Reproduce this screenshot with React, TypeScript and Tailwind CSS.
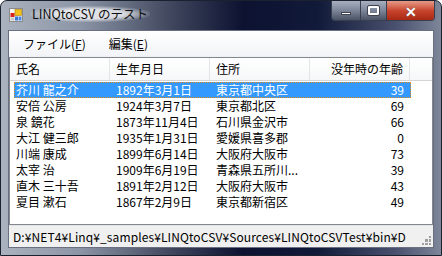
import React from "react";

const rows = [
  ["芥川 龍之介", "1892年3月1日", "東京都中央区", "39"],
  ["安倍 公房", "1924年3月7日", "東京都北区", "69"],
  ["泉 鏡花", "1873年11月4日", "石川県金沢市", "66"],
  ["大江 健三郎", "1935年1月31日", "愛媛県喜多郡", "0"],
  ["川端 康成", "1899年6月14日", "大阪府大阪市", "73"],
  ["太宰 治", "1909年6月19日", "青森県五所川...", "39"],
  ["直木 三十吾", "1891年2月12日", "大阪府大阪市", "43"],
  ["夏目 漱石", "1867年2月9日", "東京都新宿区", "49"],
];

const font = "font-['Noto_Sans_CJK_JP','Noto_Sans',sans-serif]";

function AppIcon() {
  return (
    <svg width="14" height="14" viewBox="0 0 14 14">
      <rect x="0.5" y="0.5" width="13" height="13" fill="#f4f4f4" stroke="#8a8a8a" />
      <rect x="6" y="1.5" width="6.5" height="6" fill="#f2c21b" stroke="#b08000" strokeWidth="0.6" />
      <rect x="1.5" y="5" width="4" height="4" fill="#d8231b" />
      <rect x="6" y="8.5" width="3" height="4" fill="#3a78d8" />
      <rect x="9.5" y="8.5" width="3" height="4" fill="#4a88e8" />
      <rect x="1.5" y="9.5" width="4" height="3" fill="#c8c8c8" />
    </svg>
  );
}

export default function App() {
  return (
    <div className={`w-[442px] h-[256px] overflow-hidden ${font} rounded-t-[7px] bg-[linear-gradient(90deg,#aab2be_0%,#8c95a6_18%,#3b4259_40%,#0c1230_55%,#121a3a_72%,#4a5270_90%,#7e8699_100%)] border border-[#1c2130] flex flex-col`}>
      {/* title bar */}
      <div className="h-[29px] flex items-start shrink-0">
        <div className="ml-[8px] mt-[7px]">
          <AppIcon />
        </div>
        <div className="ml-[7px] mt-[5px] px-[2px] text-[12.5px] leading-[16px] text-[#101010] rounded-[8px] bg-[radial-gradient(ellipse_at_center,rgba(255,255,255,0.75)_40%,rgba(255,255,255,0)_75%)]">
          LINQtoCSV のテスト
        </div>
        <div className="ml-auto mr-[6px] flex h-[20px] rounded-b-[4px] overflow-hidden border border-t-0 border-[#3a3f50]">
          <div className="w-[29px] flex items-center justify-center bg-gradient-to-b from-[#a8b0bf] via-[#7d8699] to-[#4b5367] border-r border-[#3a3f50]">
            <div className="w-[10px] h-[3px] mt-[5px] bg-white border border-[#404450]" />
          </div>
          <div className="w-[26px] flex items-center justify-center bg-gradient-to-b from-[#a8b0bf] via-[#7d8699] to-[#4b5367] border-r border-[#3a3f50]">
            <div className="w-[11px] h-[9px] border-[2px] border-white outline outline-[#404450] rounded-[1px]" />
          </div>
          <div className="w-[47px] flex items-center justify-center bg-gradient-to-b from-[#e49a88] via-[#c8452e] to-[#a82812]">
            <span className="text-white font-bold text-[14px] leading-none [text-shadow:0_0_1px_#404040]">✕</span>
          </div>
        </div>
      </div>

      {/* client area */}
      <div className="mx-[7px] w-[426px] h-[218px] bg-[#f0f0f0] flex flex-col shrink-0 border border-[#6b7080]">
        {/* menu */}
        <div className="h-[25px] flex items-center text-[12px] text-black bg-gradient-to-b from-white to-[#f3f4f7] shrink-0">
          <span className="ml-[14px]">
            ファイル(<span className="underline">F</span>)
          </span>
          <span className="ml-[23px]">
            編集(<span className="underline">E</span>)
          </span>
        </div>

        {/* list view */}
        <div className="mt-[1px] h-[168px] bg-white border border-[#828790] flex flex-col text-[12px] leading-[16px] text-black">
          <div className="h-[23px] flex items-stretch shrink-0 bg-gradient-to-b from-white to-[#f6f7f8] border-b border-[#d5d5d5]">
            <div className="w-[100px] pl-[6px] flex items-center border-r border-[#e3e5e8]">氏名</div>
            <div className="w-[100px] pl-[6px] flex items-center border-r border-[#e3e5e8]">生年月日</div>
            <div className="w-[100px] pl-[6px] flex items-center border-r border-[#e3e5e8]">住所</div>
            <div className="w-[100px] pr-[6px] flex items-center justify-end border-r border-[#e3e5e8]">没年時の年齢</div>
            <div className="flex-1" />
          </div>
          <div className="mt-[1px] flex flex-col">
            {rows.map((r, i) => (
              <div
                key={i}
                className={
                  i === 0
                    ? "h-[16px] ml-[4px] w-[397px] flex bg-[#3399ff] text-white outline outline-1 -outline-offset-1 outline-dotted outline-[#e08a1a]"
                    : "h-[16px] ml-[4px] w-[397px] flex"
                }
              >
                <div className="w-[96px] pl-[2px] whitespace-nowrap overflow-hidden">{r[0]}</div>
                <div className="w-[100px] pl-[6px] whitespace-nowrap overflow-hidden">{r[1]}</div>
                <div className="w-[100px] pl-[6px] whitespace-nowrap overflow-hidden">{r[2]}</div>
                <div className="w-[101px] pr-[7px] text-right">{r[3]}</div>
              </div>
            ))}
          </div>
        </div>

        {/* status bar */}
        <div className="flex-1 flex items-center bg-[#f0f0f0] border-t border-[#e4e4e4] text-[12px] text-black relative">
          <span className="ml-[4px] whitespace-nowrap tracking-[0.1px]">
            D:¥NET4¥Linq¥_samples¥LINQtoCSV¥Sources¥LINQtoCSVTest¥bin¥D
          </span>
          <div className="ml-auto mr-[2px] mt-[8px] grid grid-cols-3 gap-[1px] w-[9px] h-[9px] shrink-0">
            <span />
            <span />
            <span className="bg-[#a0a0a0]" />
            <span />
            <span className="bg-[#a0a0a0]" />
            <span className="bg-[#a0a0a0]" />
            <span className="bg-[#a0a0a0]" />
            <span className="bg-[#a0a0a0]" />
            <span className="bg-[#a0a0a0]" />
          </div>
        </div>
      </div>
    </div>
  );
}
